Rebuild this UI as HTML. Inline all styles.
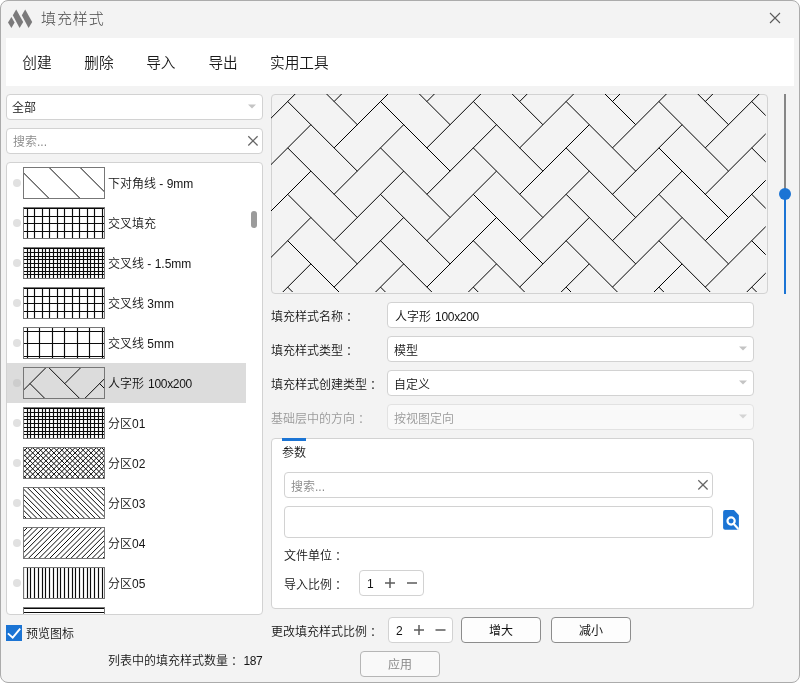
<!DOCTYPE html>
<html lang="zh-CN">
<head>
<meta charset="utf-8">
<title>填充样式</title>
<style>
html,body{margin:0;padding:0;background:#fff;}
body{width:800px;height:683px;position:relative;overflow:hidden;
  font-family:"Liberation Sans","Noto Sans CJK SC",sans-serif;font-size:12px;color:#141414;font-weight:350;}
#win{position:absolute;left:0;top:0;width:798px;height:681px;background:#f3f3f3;border:1px solid #ababab;border-radius:8px;}
#root{position:absolute;left:0;top:0;width:800px;height:683px;will-change:transform;}
.abs{position:absolute;}
.t{position:absolute;white-space:nowrap;line-height:16px;height:16px;margin-top:1px;}
#title{left:41px;top:8px;font-size:15px;line-height:20px;height:20px;color:#4a4a4a;letter-spacing:0.9px;font-weight:300;}
#toolbar{left:6px;top:38px;width:788px;height:48px;background:#fff;}
.menu{position:absolute;top:52.5px;font-size:14.67px;line-height:20px;height:20px;color:#1a1a1a;white-space:nowrap;font-weight:350;}
.box{position:absolute;box-sizing:border-box;background:#fff;border:1px solid #d2d2d2;border-radius:4px;}
.box.dis{background:#f9f9f9;border-color:#e2e2e2;}
.ph{color:#8a8a8a;}
.c{margin-left:3px;}
.dis-t{color:#9a9a9a;}
.btn{position:absolute;box-sizing:border-box;background:#fdfdfd;border:1px solid #8c8c8c;border-radius:4px;text-align:center;line-height:24px;font-size:12px;padding-top:1px;font-weight:400;}
.btn.dis{border-color:#b6b6b6;color:#8a8a8a;background:#f9f9f9;font-weight:400;}
.item{position:absolute;left:7px;width:239px;height:40px;}
.item.sel{background:#dcdcdc;}
.dot{position:absolute;left:6px;width:8px;height:8px;border-radius:50%;background:#e1e1e1;}
.thumb{position:absolute;left:16px;width:82px;height:32px;}
.lbl{position:absolute;left:101px;white-space:nowrap;line-height:16px;height:16px;}
</style>
</head>
<body>
<div id="root">
<div id="win"></div>

<!-- title bar -->
<svg class="abs" style="left:6px;top:8px" width="28" height="22" viewBox="6 8 28 22">
  <polygon points="8,22.4 11.4,17 14.6,22.4 11.4,27.9" fill="#7b7a7b"/>
  <polygon points="16.2,9.6 23.2,21.9 19.6,27.9 12.8,15.2" fill="#7b7a7b"/>
  <polygon points="25.2,9.6 32.2,21.9 28.6,27.9 21.8,15.2" fill="#7b7a7b"/>
</svg>
<div id="title" class="t">填充样式</div>
<svg class="abs" style="left:768px;top:11px" width="14" height="14" viewBox="0 0 14 14">
  <path d="M2 2 L12 12 M12 2 L2 12" stroke="#5a5a5a" stroke-width="1.1" fill="none"/>
</svg>

<!-- toolbar -->
<div id="toolbar" class="abs"></div>
<div class="menu" style="left:22.3px">创建</div>
<div class="menu" style="left:84.3px">删除</div>
<div class="menu" style="left:146.2px">导入</div>
<div class="menu" style="left:208.4px">导出</div>
<div class="menu" style="left:270px">实用工具</div>

<!-- left filter -->
<div class="box" style="left:6px;top:94px;width:257px;height:26px"></div>
<div class="t" style="left:12px;top:99px">全部</div>
<svg class="abs" style="left:247px;top:104px" width="10" height="6"><polygon points="1,0.5 9,0.5 5,4.6" fill="#c4c4c4"/></svg>
<div class="box" style="left:6px;top:128px;width:257px;height:26px"></div>
<div class="t ph" style="left:13px;top:133px">搜索...</div>
<svg class="abs" style="left:246px;top:134px" width="14" height="14"><path d="M2.3 2.2 L11.6 11.5 M11.6 2.2 L2.3 11.5" stroke="#666" stroke-width="1.25" fill="none"/></svg>

<!-- list -->
<div class="box" id="list" style="left:6px;top:162px;width:257px;height:453px"></div>
<div id="items" style="position:absolute;left:0;top:0;width:263px;height:614px;overflow:hidden">
<div class="item" style="top:163px">
<div class="dot" style="top:16px"></div>
<svg class="thumb" style="top:4px" width="82" height="32" viewBox="0 0 82 32"><rect x="0" y="0" width="82" height="32" fill="#fff"/><g stroke="#0a0a0a" stroke-width="1.0" fill="none"><path d="M-5.40 0L26.60 32M25.60 0L57.60 32M56.60 0L88.60 32"/></g><rect x="0.5" y="0.5" width="81" height="31" fill="none" stroke="#777"/></svg>
<div class="lbl" style="top:13px">下对角线 - 9mm</div>
</div>
<div class="item" style="top:203px">
<div class="dot" style="top:16px"></div>
<svg class="thumb" style="top:4px" width="82" height="32" viewBox="0 0 82 32"><rect x="0" y="0" width="82" height="32" fill="#fff"/><g stroke="#0a0a0a" stroke-width="1.15" fill="none"><path d="M4.50 0V32M11.50 0V32M19.50 0V32M26.50 0V32M34.50 0V32M41.50 0V32M49.50 0V32M56.50 0V32M64.50 0V32M71.50 0V32M79.50 0V32"/><path d="M0 1.50H82M0 9.50H82M0 16.50H82M0 24.50H82M0 31.50H82"/></g><rect x="0.5" y="0.5" width="81" height="31" fill="none" stroke="#777"/></svg>
<div class="lbl" style="top:13px">交叉填充</div>
</div>
<div class="item" style="top:243px">
<div class="dot" style="top:16px"></div>
<svg class="thumb" style="top:4px" width="82" height="32" viewBox="0 0 82 32"><rect x="0" y="0" width="82" height="32" fill="#fff"/><g stroke="#0a0a0a" stroke-width="1.15" fill="none"><path d="M0.50 0V32M4.50 0V32M7.50 0V32M11.50 0V32M15.50 0V32M19.50 0V32M22.50 0V32M26.50 0V32M30.50 0V32M34.50 0V32M37.50 0V32M41.50 0V32M45.50 0V32M49.50 0V32M52.50 0V32M56.50 0V32M60.50 0V32M64.50 0V32M67.50 0V32M71.50 0V32M75.50 0V32M79.50 0V32"/><path d="M0 1.50H82M0 5.50H82M0 9.50H82M0 12.50H82M0 16.50H82M0 20.50H82M0 24.50H82M0 27.50H82M0 31.50H82"/></g><rect x="0.5" y="0.5" width="81" height="31" fill="none" stroke="#777"/></svg>
<div class="lbl" style="top:13px">交叉线 - 1.5mm</div>
</div>
<div class="item" style="top:283px">
<div class="dot" style="top:16px"></div>
<svg class="thumb" style="top:4px" width="82" height="32" viewBox="0 0 82 32"><rect x="0" y="0" width="82" height="32" fill="#fff"/><g stroke="#0a0a0a" stroke-width="1.15" fill="none"><path d="M4.50 0V32M11.50 0V32M19.50 0V32M26.50 0V32M34.50 0V32M41.50 0V32M49.50 0V32M56.50 0V32M64.50 0V32M71.50 0V32M79.50 0V32"/><path d="M0 1.50H82M0 9.50H82M0 16.50H82M0 24.50H82M0 31.50H82"/></g><rect x="0.5" y="0.5" width="81" height="31" fill="none" stroke="#777"/></svg>
<div class="lbl" style="top:13px">交叉线 3mm</div>
</div>
<div class="item" style="top:323px">
<div class="dot" style="top:16px"></div>
<svg class="thumb" style="top:4px" width="82" height="32" viewBox="0 0 82 32"><rect x="0" y="0" width="82" height="32" fill="#fff"/><g stroke="#0a0a0a" stroke-width="1.15" fill="none"><path d="M4.50 0V32M16.50 0V32M29.50 0V32M41.50 0V32M54.50 0V32M66.50 0V32M79.50 0V32"/><path d="M0 4.50H82M0 16.50H82M0 29.50H82"/></g><rect x="0.5" y="0.5" width="81" height="31" fill="none" stroke="#777"/></svg>
<div class="lbl" style="top:13px">交叉线 5mm</div>
</div>
<div class="item sel" style="top:363px">
<div class="dot" style="top:16px;background:#cdcdcd"></div>
<svg class="thumb" style="top:4px" width="82" height="32" viewBox="0 0 82 32"><rect x="0" y="0" width="82" height="32" fill="none"/><g stroke="#0a0a0a" stroke-width="1.0" fill="none"><path d="M-167.00 -122.60l52.20 -52.20M-201.80 -122.60l52.20 52.20M-167.00 -87.80l52.20 -52.20M-201.80 -87.80l52.20 52.20M-167.00 -53.00l52.20 -52.20M-201.80 -53.00l52.20 52.20M-167.00 -18.20l52.20 -52.20M-201.80 -18.20l52.20 52.20M-167.00 16.60l52.20 -52.20M-201.80 16.60l52.20 52.20M-167.00 51.40l52.20 -52.20M-201.80 51.40l52.20 52.20M-167.00 86.20l52.20 -52.20M-201.80 86.20l52.20 52.20M-167.00 121.00l52.20 -52.20M-201.80 121.00l52.20 52.20M-167.00 155.80l52.20 -52.20M-201.80 155.80l52.20 52.20M-97.40 -122.60l52.20 -52.20M-132.20 -122.60l52.20 52.20M-97.40 -87.80l52.20 -52.20M-132.20 -87.80l52.20 52.20M-97.40 -53.00l52.20 -52.20M-132.20 -53.00l52.20 52.20M-97.40 -18.20l52.20 -52.20M-132.20 -18.20l52.20 52.20M-97.40 16.60l52.20 -52.20M-132.20 16.60l52.20 52.20M-97.40 51.40l52.20 -52.20M-132.20 51.40l52.20 52.20M-97.40 86.20l52.20 -52.20M-132.20 86.20l52.20 52.20M-97.40 121.00l52.20 -52.20M-132.20 121.00l52.20 52.20M-97.40 155.80l52.20 -52.20M-132.20 155.80l52.20 52.20M-27.80 -122.60l52.20 -52.20M-62.60 -122.60l52.20 52.20M-27.80 -87.80l52.20 -52.20M-62.60 -87.80l52.20 52.20M-27.80 -53.00l52.20 -52.20M-62.60 -53.00l52.20 52.20M-27.80 -18.20l52.20 -52.20M-62.60 -18.20l52.20 52.20M-27.80 16.60l52.20 -52.20M-62.60 16.60l52.20 52.20M-27.80 51.40l52.20 -52.20M-62.60 51.40l52.20 52.20M-27.80 86.20l52.20 -52.20M-62.60 86.20l52.20 52.20M-27.80 121.00l52.20 -52.20M-62.60 121.00l52.20 52.20M-27.80 155.80l52.20 -52.20M-62.60 155.80l52.20 52.20M41.80 -122.60l52.20 -52.20M7.00 -122.60l52.20 52.20M41.80 -87.80l52.20 -52.20M7.00 -87.80l52.20 52.20M41.80 -53.00l52.20 -52.20M7.00 -53.00l52.20 52.20M41.80 -18.20l52.20 -52.20M7.00 -18.20l52.20 52.20M41.80 16.60l52.20 -52.20M7.00 16.60l52.20 52.20M41.80 51.40l52.20 -52.20M7.00 51.40l52.20 52.20M41.80 86.20l52.20 -52.20M7.00 86.20l52.20 52.20M41.80 121.00l52.20 -52.20M7.00 121.00l52.20 52.20M41.80 155.80l52.20 -52.20M7.00 155.80l52.20 52.20M111.40 -122.60l52.20 -52.20M76.60 -122.60l52.20 52.20M111.40 -87.80l52.20 -52.20M76.60 -87.80l52.20 52.20M111.40 -53.00l52.20 -52.20M76.60 -53.00l52.20 52.20M111.40 -18.20l52.20 -52.20M76.60 -18.20l52.20 52.20M111.40 16.60l52.20 -52.20M76.60 16.60l52.20 52.20M111.40 51.40l52.20 -52.20M76.60 51.40l52.20 52.20M111.40 86.20l52.20 -52.20M76.60 86.20l52.20 52.20M111.40 121.00l52.20 -52.20M76.60 121.00l52.20 52.20M111.40 155.80l52.20 -52.20M76.60 155.80l52.20 52.20M181.00 -122.60l52.20 -52.20M146.20 -122.60l52.20 52.20M181.00 -87.80l52.20 -52.20M146.20 -87.80l52.20 52.20M181.00 -53.00l52.20 -52.20M146.20 -53.00l52.20 52.20M181.00 -18.20l52.20 -52.20M146.20 -18.20l52.20 52.20M181.00 16.60l52.20 -52.20M146.20 16.60l52.20 52.20M181.00 51.40l52.20 -52.20M146.20 51.40l52.20 52.20M181.00 86.20l52.20 -52.20M146.20 86.20l52.20 52.20M181.00 121.00l52.20 -52.20M146.20 121.00l52.20 52.20M181.00 155.80l52.20 -52.20M146.20 155.80l52.20 52.20M250.60 -122.60l52.20 -52.20M215.80 -122.60l52.20 52.20M250.60 -87.80l52.20 -52.20M215.80 -87.80l52.20 52.20M250.60 -53.00l52.20 -52.20M215.80 -53.00l52.20 52.20M250.60 -18.20l52.20 -52.20M215.80 -18.20l52.20 52.20M250.60 16.60l52.20 -52.20M215.80 16.60l52.20 52.20M250.60 51.40l52.20 -52.20M215.80 51.40l52.20 52.20M250.60 86.20l52.20 -52.20M215.80 86.20l52.20 52.20M250.60 121.00l52.20 -52.20M215.80 121.00l52.20 52.20M250.60 155.80l52.20 -52.20M215.80 155.80l52.20 52.20"/></g><rect x="0.5" y="0.5" width="81" height="31" fill="none" stroke="#777"/></svg>
<div class="lbl" style="top:13px">人字形 <span style="letter-spacing:-0.3px;margin-left:0.7px">100x200</span></div>
</div>
<div class="item" style="top:403px">
<div class="dot" style="top:16px"></div>
<svg class="thumb" style="top:4px" width="82" height="32" viewBox="0 0 82 32"><rect x="0" y="0" width="82" height="32" fill="#fff"/><g stroke="#0a0a0a" stroke-width="1.15" fill="none"><path d="M0.50 0V32M4.50 0V32M7.50 0V32M11.50 0V32M15.50 0V32M19.50 0V32M22.50 0V32M26.50 0V32M30.50 0V32M34.50 0V32M37.50 0V32M41.50 0V32M45.50 0V32M49.50 0V32M52.50 0V32M56.50 0V32M60.50 0V32M64.50 0V32M67.50 0V32M71.50 0V32M75.50 0V32M79.50 0V32"/><path d="M0 1.50H82M0 5.50H82M0 9.50H82M0 12.50H82M0 16.50H82M0 20.50H82M0 24.50H82M0 27.50H82M0 31.50H82"/></g><rect x="0.5" y="0.5" width="81" height="31" fill="none" stroke="#777"/></svg>
<div class="lbl" style="top:13px">分区01</div>
</div>
<div class="item" style="top:443px">
<div class="dot" style="top:16px"></div>
<svg class="thumb" style="top:4px" width="82" height="32" viewBox="0 0 82 32"><rect x="0" y="0" width="82" height="32" fill="#fff"/><g stroke="#0a0a0a" stroke-width="1.0" fill="none"><path d="M-28.03 0L3.97 32M-22.73 0L9.27 32M-17.42 0L14.58 32M-12.12 0L19.88 32M-6.82 0L25.18 32M-1.52 0L30.48 32M3.79 0L35.79 32M9.09 0L41.09 32M14.39 0L46.39 32M19.70 0L51.70 32M25.00 0L57.00 32M30.30 0L62.30 32M35.61 0L67.61 32M40.91 0L72.91 32M46.21 0L78.21 32M51.52 0L83.52 32M56.82 0L88.82 32M62.12 0L94.12 32M67.42 0L99.42 32M72.73 0L104.73 32M78.03 0L110.03 32"/><path d="M-0.33 0L-32.33 32M4.97 0L-27.03 32M10.27 0L-21.73 32M15.58 0L-16.42 32M20.88 0L-11.12 32M26.18 0L-5.82 32M31.48 0L-0.52 32M36.79 0L4.79 32M42.09 0L10.09 32M47.39 0L15.39 32M52.70 0L20.70 32M58.00 0L26.00 32M63.30 0L31.30 32M68.61 0L36.61 32M73.91 0L41.91 32M79.21 0L47.21 32M84.52 0L52.52 32M89.82 0L57.82 32M95.12 0L63.12 32M100.42 0L68.42 32M105.73 0L73.73 32M111.03 0L79.03 32"/></g><rect x="0.5" y="0.5" width="81" height="31" fill="none" stroke="#777"/></svg>
<div class="lbl" style="top:13px">分区02</div>
</div>
<div class="item" style="top:483px">
<div class="dot" style="top:16px"></div>
<svg class="thumb" style="top:4px" width="82" height="32" viewBox="0 0 82 32"><rect x="0" y="0" width="82" height="32" fill="#fff"/><g stroke="#0a0a0a" stroke-width="1.0" fill="none"><path d="M-28.03 0L3.97 32M-22.73 0L9.27 32M-17.42 0L14.58 32M-12.12 0L19.88 32M-6.82 0L25.18 32M-1.52 0L30.48 32M3.79 0L35.79 32M9.09 0L41.09 32M14.39 0L46.39 32M19.70 0L51.70 32M25.00 0L57.00 32M30.30 0L62.30 32M35.61 0L67.61 32M40.91 0L72.91 32M46.21 0L78.21 32M51.52 0L83.52 32M56.82 0L88.82 32M62.12 0L94.12 32M67.42 0L99.42 32M72.73 0L104.73 32M78.03 0L110.03 32"/></g><rect x="0.5" y="0.5" width="81" height="31" fill="none" stroke="#777"/></svg>
<div class="lbl" style="top:13px">分区03</div>
</div>
<div class="item" style="top:523px">
<div class="dot" style="top:16px"></div>
<svg class="thumb" style="top:4px" width="82" height="32" viewBox="0 0 82 32"><rect x="0" y="0" width="82" height="32" fill="#fff"/><g stroke="#0a0a0a" stroke-width="1.0" fill="none"><path d="M-0.33 0L-32.33 32M4.97 0L-27.03 32M10.27 0L-21.73 32M15.58 0L-16.42 32M20.88 0L-11.12 32M26.18 0L-5.82 32M31.48 0L-0.52 32M36.79 0L4.79 32M42.09 0L10.09 32M47.39 0L15.39 32M52.70 0L20.70 32M58.00 0L26.00 32M63.30 0L31.30 32M68.61 0L36.61 32M73.91 0L41.91 32M79.21 0L47.21 32M84.52 0L52.52 32M89.82 0L57.82 32M95.12 0L63.12 32M100.42 0L68.42 32M105.73 0L73.73 32M111.03 0L79.03 32"/></g><rect x="0.5" y="0.5" width="81" height="31" fill="none" stroke="#777"/></svg>
<div class="lbl" style="top:13px">分区04</div>
</div>
<div class="item" style="top:563px">
<div class="dot" style="top:16px"></div>
<svg class="thumb" style="top:4px" width="82" height="32" viewBox="0 0 82 32"><rect x="0" y="0" width="82" height="32" fill="#fff"/><g stroke="#0a0a0a" stroke-width="1.15" fill="none"><path d="M0.50 0V32M4.50 0V32M7.50 0V32M11.50 0V32M15.50 0V32M19.50 0V32M22.50 0V32M26.50 0V32M30.50 0V32M34.50 0V32M37.50 0V32M41.50 0V32M45.50 0V32M49.50 0V32M52.50 0V32M56.50 0V32M60.50 0V32M64.50 0V32M67.50 0V32M71.50 0V32M75.50 0V32M79.50 0V32"/></g><rect x="0.5" y="0.5" width="81" height="31" fill="none" stroke="#777"/></svg>
<div class="lbl" style="top:13px">分区05</div>
</div>
<div class="item" style="top:603px">
<div class="dot" style="top:16px"></div>
<svg class="thumb" style="top:4px" width="82" height="32" viewBox="0 0 82 32"><rect x="0" y="0" width="82" height="32" fill="#fff"/><g stroke="#0a0a0a" stroke-width="1.15" fill="none"><path d="M0 1.50H82M0 5.50H82M0 9.50H82M0 12.50H82M0 16.50H82M0 20.50H82M0 24.50H82M0 27.50H82M0 31.50H82"/></g><rect x="0.5" y="0.5" width="81" height="31" fill="none" stroke="#777"/></svg>
</div>
</div>
<div class="abs" style="left:251px;top:211px;width:6px;height:17px;border-radius:3px;background:#9b9b9b"></div>

<!-- preview -->

<div class="box" id="preview" style="left:271px;top:94px;width:497px;height:200px;background:#f3f3f3"></div>

<svg class="abs" style="left:271px;top:94px" width="497" height="200" viewBox="0 0 497 200"><defs><clipPath id="pc"><rect x="0" y="0" width="494.7" height="198" rx="3"/></clipPath></defs><g clip-path="url(#pc)" stroke="#000" stroke-width="1" fill="none"><path d="M-215.30 -178.10l69.60 -69.60M-261.70 -178.10l69.60 69.60M-215.30 -131.70l69.60 -69.60M-261.70 -131.70l69.60 69.60M-215.30 -85.30l69.60 -69.60M-261.70 -85.30l69.60 69.60M-215.30 -38.90l69.60 -69.60M-261.70 -38.90l69.60 69.60M-215.30 7.50l69.60 -69.60M-261.70 7.50l69.60 69.60M-215.30 53.90l69.60 -69.60M-261.70 53.90l69.60 69.60M-215.30 100.30l69.60 -69.60M-261.70 100.30l69.60 69.60M-215.30 146.70l69.60 -69.60M-261.70 146.70l69.60 69.60M-215.30 193.10l69.60 -69.60M-261.70 193.10l69.60 69.60M-215.30 239.50l69.60 -69.60M-261.70 239.50l69.60 69.60M-215.30 285.90l69.60 -69.60M-261.70 285.90l69.60 69.60M-215.30 332.30l69.60 -69.60M-261.70 332.30l69.60 69.60M-215.30 378.70l69.60 -69.60M-261.70 378.70l69.60 69.60M-122.50 -178.10l69.60 -69.60M-168.90 -178.10l69.60 69.60M-122.50 -131.70l69.60 -69.60M-168.90 -131.70l69.60 69.60M-122.50 -85.30l69.60 -69.60M-168.90 -85.30l69.60 69.60M-122.50 -38.90l69.60 -69.60M-168.90 -38.90l69.60 69.60M-122.50 7.50l69.60 -69.60M-168.90 7.50l69.60 69.60M-122.50 53.90l69.60 -69.60M-168.90 53.90l69.60 69.60M-122.50 100.30l69.60 -69.60M-168.90 100.30l69.60 69.60M-122.50 146.70l69.60 -69.60M-168.90 146.70l69.60 69.60M-122.50 193.10l69.60 -69.60M-168.90 193.10l69.60 69.60M-122.50 239.50l69.60 -69.60M-168.90 239.50l69.60 69.60M-122.50 285.90l69.60 -69.60M-168.90 285.90l69.60 69.60M-122.50 332.30l69.60 -69.60M-168.90 332.30l69.60 69.60M-122.50 378.70l69.60 -69.60M-168.90 378.70l69.60 69.60M-29.70 -178.10l69.60 -69.60M-76.10 -178.10l69.60 69.60M-29.70 -131.70l69.60 -69.60M-76.10 -131.70l69.60 69.60M-29.70 -85.30l69.60 -69.60M-76.10 -85.30l69.60 69.60M-29.70 -38.90l69.60 -69.60M-76.10 -38.90l69.60 69.60M-29.70 7.50l69.60 -69.60M-76.10 7.50l69.60 69.60M-29.70 53.90l69.60 -69.60M-76.10 53.90l69.60 69.60M-29.70 100.30l69.60 -69.60M-76.10 100.30l69.60 69.60M-29.70 146.70l69.60 -69.60M-76.10 146.70l69.60 69.60M-29.70 193.10l69.60 -69.60M-76.10 193.10l69.60 69.60M-29.70 239.50l69.60 -69.60M-76.10 239.50l69.60 69.60M-29.70 285.90l69.60 -69.60M-76.10 285.90l69.60 69.60M-29.70 332.30l69.60 -69.60M-76.10 332.30l69.60 69.60M-29.70 378.70l69.60 -69.60M-76.10 378.70l69.60 69.60M63.10 -178.10l69.60 -69.60M16.70 -178.10l69.60 69.60M63.10 -131.70l69.60 -69.60M16.70 -131.70l69.60 69.60M63.10 -85.30l69.60 -69.60M16.70 -85.30l69.60 69.60M63.10 -38.90l69.60 -69.60M16.70 -38.90l69.60 69.60M63.10 7.50l69.60 -69.60M16.70 7.50l69.60 69.60M63.10 53.90l69.60 -69.60M16.70 53.90l69.60 69.60M63.10 100.30l69.60 -69.60M16.70 100.30l69.60 69.60M63.10 146.70l69.60 -69.60M16.70 146.70l69.60 69.60M63.10 193.10l69.60 -69.60M16.70 193.10l69.60 69.60M63.10 239.50l69.60 -69.60M16.70 239.50l69.60 69.60M63.10 285.90l69.60 -69.60M16.70 285.90l69.60 69.60M63.10 332.30l69.60 -69.60M16.70 332.30l69.60 69.60M63.10 378.70l69.60 -69.60M16.70 378.70l69.60 69.60M155.90 -178.10l69.60 -69.60M109.50 -178.10l69.60 69.60M155.90 -131.70l69.60 -69.60M109.50 -131.70l69.60 69.60M155.90 -85.30l69.60 -69.60M109.50 -85.30l69.60 69.60M155.90 -38.90l69.60 -69.60M109.50 -38.90l69.60 69.60M155.90 7.50l69.60 -69.60M109.50 7.50l69.60 69.60M155.90 53.90l69.60 -69.60M109.50 53.90l69.60 69.60M155.90 100.30l69.60 -69.60M109.50 100.30l69.60 69.60M155.90 146.70l69.60 -69.60M109.50 146.70l69.60 69.60M155.90 193.10l69.60 -69.60M109.50 193.10l69.60 69.60M155.90 239.50l69.60 -69.60M109.50 239.50l69.60 69.60M155.90 285.90l69.60 -69.60M109.50 285.90l69.60 69.60M155.90 332.30l69.60 -69.60M109.50 332.30l69.60 69.60M155.90 378.70l69.60 -69.60M109.50 378.70l69.60 69.60M248.70 -178.10l69.60 -69.60M202.30 -178.10l69.60 69.60M248.70 -131.70l69.60 -69.60M202.30 -131.70l69.60 69.60M248.70 -85.30l69.60 -69.60M202.30 -85.30l69.60 69.60M248.70 -38.90l69.60 -69.60M202.30 -38.90l69.60 69.60M248.70 7.50l69.60 -69.60M202.30 7.50l69.60 69.60M248.70 53.90l69.60 -69.60M202.30 53.90l69.60 69.60M248.70 100.30l69.60 -69.60M202.30 100.30l69.60 69.60M248.70 146.70l69.60 -69.60M202.30 146.70l69.60 69.60M248.70 193.10l69.60 -69.60M202.30 193.10l69.60 69.60M248.70 239.50l69.60 -69.60M202.30 239.50l69.60 69.60M248.70 285.90l69.60 -69.60M202.30 285.90l69.60 69.60M248.70 332.30l69.60 -69.60M202.30 332.30l69.60 69.60M248.70 378.70l69.60 -69.60M202.30 378.70l69.60 69.60M341.50 -178.10l69.60 -69.60M295.10 -178.10l69.60 69.60M341.50 -131.70l69.60 -69.60M295.10 -131.70l69.60 69.60M341.50 -85.30l69.60 -69.60M295.10 -85.30l69.60 69.60M341.50 -38.90l69.60 -69.60M295.10 -38.90l69.60 69.60M341.50 7.50l69.60 -69.60M295.10 7.50l69.60 69.60M341.50 53.90l69.60 -69.60M295.10 53.90l69.60 69.60M341.50 100.30l69.60 -69.60M295.10 100.30l69.60 69.60M341.50 146.70l69.60 -69.60M295.10 146.70l69.60 69.60M341.50 193.10l69.60 -69.60M295.10 193.10l69.60 69.60M341.50 239.50l69.60 -69.60M295.10 239.50l69.60 69.60M341.50 285.90l69.60 -69.60M295.10 285.90l69.60 69.60M341.50 332.30l69.60 -69.60M295.10 332.30l69.60 69.60M341.50 378.70l69.60 -69.60M295.10 378.70l69.60 69.60M434.30 -178.10l69.60 -69.60M387.90 -178.10l69.60 69.60M434.30 -131.70l69.60 -69.60M387.90 -131.70l69.60 69.60M434.30 -85.30l69.60 -69.60M387.90 -85.30l69.60 69.60M434.30 -38.90l69.60 -69.60M387.90 -38.90l69.60 69.60M434.30 7.50l69.60 -69.60M387.90 7.50l69.60 69.60M434.30 53.90l69.60 -69.60M387.90 53.90l69.60 69.60M434.30 100.30l69.60 -69.60M387.90 100.30l69.60 69.60M434.30 146.70l69.60 -69.60M387.90 146.70l69.60 69.60M434.30 193.10l69.60 -69.60M387.90 193.10l69.60 69.60M434.30 239.50l69.60 -69.60M387.90 239.50l69.60 69.60M434.30 285.90l69.60 -69.60M387.90 285.90l69.60 69.60M434.30 332.30l69.60 -69.60M387.90 332.30l69.60 69.60M434.30 378.70l69.60 -69.60M387.90 378.70l69.60 69.60M527.10 -178.10l69.60 -69.60M480.70 -178.10l69.60 69.60M527.10 -131.70l69.60 -69.60M480.70 -131.70l69.60 69.60M527.10 -85.30l69.60 -69.60M480.70 -85.30l69.60 69.60M527.10 -38.90l69.60 -69.60M480.70 -38.90l69.60 69.60M527.10 7.50l69.60 -69.60M480.70 7.50l69.60 69.60M527.10 53.90l69.60 -69.60M480.70 53.90l69.60 69.60M527.10 100.30l69.60 -69.60M480.70 100.30l69.60 69.60M527.10 146.70l69.60 -69.60M480.70 146.70l69.60 69.60M527.10 193.10l69.60 -69.60M480.70 193.10l69.60 69.60M527.10 239.50l69.60 -69.60M480.70 239.50l69.60 69.60M527.10 285.90l69.60 -69.60M480.70 285.90l69.60 69.60M527.10 332.30l69.60 -69.60M480.70 332.30l69.60 69.60M527.10 378.70l69.60 -69.60M480.70 378.70l69.60 69.60M619.90 -178.10l69.60 -69.60M573.50 -178.10l69.60 69.60M619.90 -131.70l69.60 -69.60M573.50 -131.70l69.60 69.60M619.90 -85.30l69.60 -69.60M573.50 -85.30l69.60 69.60M619.90 -38.90l69.60 -69.60M573.50 -38.90l69.60 69.60M619.90 7.50l69.60 -69.60M573.50 7.50l69.60 69.60M619.90 53.90l69.60 -69.60M573.50 53.90l69.60 69.60M619.90 100.30l69.60 -69.60M573.50 100.30l69.60 69.60M619.90 146.70l69.60 -69.60M573.50 146.70l69.60 69.60M619.90 193.10l69.60 -69.60M573.50 193.10l69.60 69.60M619.90 239.50l69.60 -69.60M573.50 239.50l69.60 69.60M619.90 285.90l69.60 -69.60M573.50 285.90l69.60 69.60M619.90 332.30l69.60 -69.60M573.50 332.30l69.60 69.60M619.90 378.70l69.60 -69.60M573.50 378.70l69.60 69.60M712.70 -178.10l69.60 -69.60M666.30 -178.10l69.60 69.60M712.70 -131.70l69.60 -69.60M666.30 -131.70l69.60 69.60M712.70 -85.30l69.60 -69.60M666.30 -85.30l69.60 69.60M712.70 -38.90l69.60 -69.60M666.30 -38.90l69.60 69.60M712.70 7.50l69.60 -69.60M666.30 7.50l69.60 69.60M712.70 53.90l69.60 -69.60M666.30 53.90l69.60 69.60M712.70 100.30l69.60 -69.60M666.30 100.30l69.60 69.60M712.70 146.70l69.60 -69.60M666.30 146.70l69.60 69.60M712.70 193.10l69.60 -69.60M666.30 193.10l69.60 69.60M712.70 239.50l69.60 -69.60M666.30 239.50l69.60 69.60M712.70 285.90l69.60 -69.60M666.30 285.90l69.60 69.60M712.70 332.30l69.60 -69.60M666.30 332.30l69.60 69.60M712.70 378.70l69.60 -69.60M666.30 378.70l69.60 69.60"/></g></svg>
<!-- slider -->
<div class="abs" style="left:784px;top:94px;width:2px;height:100px;background:#868686"></div>
<div class="abs" style="left:784px;top:194px;width:2px;height:100px;background:#1b74d4"></div>
<div class="abs" style="left:779px;top:188px;width:12px;height:12px;border-radius:50%;background:#1b74d4"></div>

<!-- form -->
<div class="t" style="left:271px;top:308px">填充样式名称<span class="c">：</span></div>
<div class="box" style="left:387px;top:302px;width:367px;height:26px"></div>
<div class="t" style="left:395px;top:308px">人字形 <span style="letter-spacing:-0.3px;margin-left:0.7px">100x200</span></div>

<div class="t" style="left:271px;top:342px">填充样式类型<span class="c">：</span></div>
<div class="box" style="left:387px;top:336px;width:367px;height:26px"></div>
<div class="t" style="left:394px;top:342px">模型</div>
<svg class="abs" style="left:738px;top:346px" width="10" height="6"><polygon points="1,0.5 9,0.5 5,4.6" fill="#c4c4c4"/></svg>

<div class="t" style="left:271px;top:376px">填充样式创建类型<span class="c">：</span></div>
<div class="box" style="left:387px;top:370px;width:367px;height:26px"></div>
<div class="t" style="left:394px;top:376px">自定义</div>
<svg class="abs" style="left:738px;top:380px" width="10" height="6"><polygon points="1,0.5 9,0.5 5,4.6" fill="#c4c4c4"/></svg>

<div class="t dis-t" style="left:271px;top:410px">基础层中的方向<span class="c">：</span></div>
<div class="box dis" style="left:387px;top:404px;width:367px;height:26px"></div>
<div class="t dis-t" style="left:394px;top:410px">按视图定向</div>
<svg class="abs" style="left:738px;top:414px" width="10" height="6"><polygon points="1,0.5 9,0.5 5,4.6" fill="#d4d4d4"/></svg>

<!-- params group -->
<div class="box" style="left:271px;top:438px;width:483px;height:171px"></div>
<div class="abs" style="left:282px;top:438px;width:24px;height:3px;background:#1b74d4"></div>
<div class="t" style="left:282px;top:444px">参数</div>
<div class="box" style="left:284px;top:472px;width:429px;height:26px"></div>
<div class="t ph" style="left:291px;top:478px">搜索...</div>
<svg class="abs" style="left:696px;top:478px" width="14" height="14"><path d="M2.3 2.2 L11.6 11.5 M11.6 2.2 L2.3 11.5" stroke="#666" stroke-width="1.25" fill="none"/></svg>
<div class="box" style="left:284px;top:506px;width:429px;height:32px"></div>
<svg class="abs" style="left:722px;top:509px" width="18" height="22" viewBox="0 0 18 22">
  <path d="M1.1 3 Q1.1 1 3.1 1 L12 1 L16.9 6.2 L16.9 18.8 Q16.9 20.8 14.9 20.8 L3.1 20.8 Q1.1 20.8 1.1 18.8 Z" fill="#1b74d4"/>
  <circle cx="9.1" cy="12" r="3.6" fill="none" stroke="#fff" stroke-width="2.2"/>
  <path d="M11.8 15 L16.4 20" stroke="#fff" stroke-width="2.1"/>
</svg>
<div class="t" style="left:284px;top:547px">文件单位<span class="c">：</span></div>
<div class="t" style="left:284px;top:576px">导入比例<span class="c">：</span></div>
<div class="box" style="left:359px;top:570px;width:65px;height:26px"></div>
<div class="t" style="left:367px;top:575px">1</div>
<svg class="abs" style="left:384px;top:577px" width="36" height="12"><path d="M1 6H11M6 1V11M23 6H33" stroke="#5c5c5c" stroke-width="1.5" fill="none"/></svg>

<!-- bottom -->
<div class="t" style="left:271px;top:623px">更改填充样式比例<span class="c">：</span></div>
<div class="box" style="left:388px;top:617px;width:65px;height:26px"></div>
<div class="t" style="left:396px;top:622px">2</div>
<svg class="abs" style="left:413.3px;top:623.5px" width="36" height="12"><path d="M1 6H11M6 1V11M22.5 6H32.5" stroke="#5c5c5c" stroke-width="1.5" fill="none"/></svg>
<div class="btn" style="left:461px;top:617px;width:80px;height:26px">增大</div>
<div class="btn" style="left:551px;top:617px;width:80px;height:26px">减小</div>
<div class="btn dis" style="left:360px;top:651px;width:80px;height:26px">应用</div>

<!-- left bottom -->
<div class="abs" style="left:6px;top:625px;width:16px;height:16px;background:#1b74d4"></div>
<svg class="abs" style="left:6px;top:625px" width="16" height="16"><path d="M1.9 8.4 L6.7 12.6 L14.2 3.7" stroke="#fff" stroke-width="1.9" fill="none"/></svg>
<div class="t" style="left:26px;top:625px">预览图标</div>
<div class="t" style="left:108px;top:652px">列表中的填充样式数量<span class="c">：</span><span style="margin-left:0.5px;letter-spacing:-0.4px">187</span></div>

</div>
</body>
</html>
